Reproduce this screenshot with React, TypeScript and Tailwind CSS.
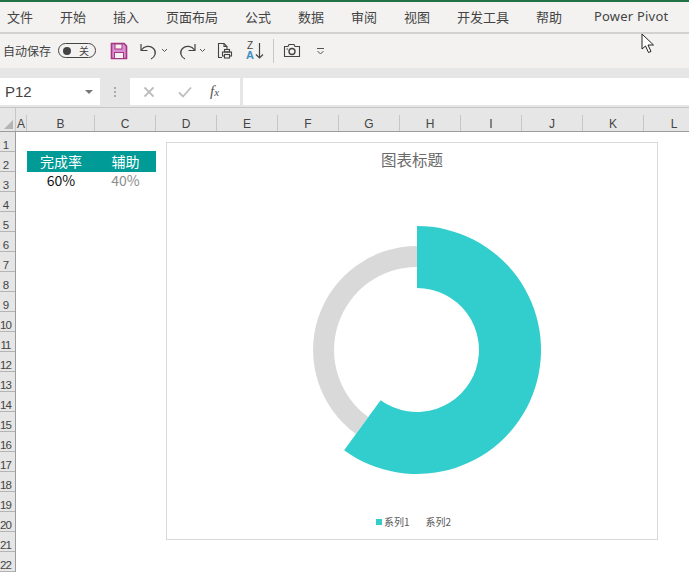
const cjk = "font-['Noto_Sans_CJK_SC','Noto_Sans',sans-serif]"

const tabs = [
  { label: '文件', w: 'w-[26px]' },
  { label: '开始', w: 'w-[26px]' },
  { label: '插入', w: 'w-[26px]' },
  { label: '页面布局', w: 'w-[52px]' },
  { label: '公式', w: 'w-[26px]' },
  { label: '数据', w: 'w-[26px]' },
  { label: '审阅', w: 'w-[26px]' },
  { label: '视图', w: 'w-[26px]' },
  { label: '开发工具', w: 'w-[52px]' },
  { label: '帮助', w: 'w-[26px]' }
]

const cols = [
  { label: 'A', w: 'w-[11px]' },
  { label: 'B', w: 'w-[68px]' },
  { label: 'C', w: 'w-[61px]' },
  { label: 'D', w: 'w-[61px]' },
  { label: 'E', w: 'w-[61px]' },
  { label: 'F', w: 'w-[61px]' },
  { label: 'G', w: 'w-[61px]' },
  { label: 'H', w: 'w-[61px]' },
  { label: 'I', w: 'w-[61px]' },
  { label: 'J', w: 'w-[61px]' },
  { label: 'K', w: 'w-[61px]' },
  { label: 'L', w: 'w-[61px]' }
]

const rows = Array.from({ length: 22 }, (_, i) => i + 1)

const Donut = () => (
  <svg width="260" height="260" viewBox="0 0 260 260" className="absolute left-[120px] top-[76.500px]">
    {/* center 130,130 = 417,349.5 on the page */}
    <path d="M130 26 A104 104 0 0 0 68.9 214.1 L81.2 197.1 A83 83 0 0 1 130 47 Z" fill="#d9d9d9" />
    <path d="M130 6 A124 124 0 1 1 57.1 230.3 L93.6 180.2 A62 62 0 1 0 130 68 Z" fill="#32cdcd" />
  </svg>
)

const Toolbar = () => (
  <div className="flex h-[34px] items-center bg-[#f3f2f1] pb-[1px]">
    <span className={`${cjk} ml-[3px] w-[50px] text-[12px] text-[#444]`}>自动保存</span>
    <div className="ml-[5px] flex h-[15px] w-[38px] shrink-0 items-center justify-between rounded-full border border-[#444] pl-[4px] pr-[6px]">
      <span className="h-[8px] w-[8px] rounded-full bg-[#444]" />
      <span className={`${cjk} text-[10px] leading-none text-[#444]`}>关</span>
    </div>
    <svg width="18" height="18" viewBox="0 0 18 18" className="ml-[14px]">
      <path d="M1.500 1.500H14L16.500 4V16.500H1.500Z" fill="#dc8fd4" stroke="#a4377f" strokeWidth="1.600" />
      <rect x="5" y="2" width="7" height="5" fill="#f3f2f1" stroke="#a4377f" />
      <rect x="4.500" y="10.500" width="9" height="6" fill="#f3f2f1" stroke="#a4377f" />
    </svg>
    <svg width="20" height="20" viewBox="0 0 20 20" className="ml-[11px]" fill="none" stroke="#444" strokeWidth="1.200">
      <path d="M2 3V9.500H8.500" />
      <path d="M2.500 9C5 5 11 4 14.500 7.500C18 11 16 16 12 18" />
    </svg>
    <svg width="7" height="5" viewBox="0 0 7 5" className="ml-[2px]" fill="none" stroke="#555">
      <path d="M1 1L3.500 3.500L6 1" />
    </svg>
    <svg width="20" height="20" viewBox="0 0 20 20" className="ml-[9px]" fill="none" stroke="#444" strokeWidth="1.200">
      <path d="M18 3V9.500H11.500" />
      <path d="M17.500 9C15 5 9 4 5.500 7.500C2 11 4 16 8 18" />
    </svg>
    <svg width="7" height="5" viewBox="0 0 7 5" className="ml-[2px]" fill="none" stroke="#555">
      <path d="M1 1L3.500 3.500L6 1" />
    </svg>
    <svg width="16" height="18" viewBox="0 0 16 18" className="ml-[11px]" fill="none" stroke="#444" strokeWidth="1.100">
      <path d="M5 15.500H1.500V1.500H7L10 4.500V7.500" />
      <path d="M7 1.500V4.500H10" />
      <rect x="7.500" y="7.500" width="5" height="2.500" />
      <rect x="5.500" y="10" width="9" height="4" />
      <rect x="7.500" y="12.500" width="5" height="3.500" fill="#f3f2f1" />
    </svg>
    <div className="ml-[12px] flex w-[10px] flex-col items-center">
      <span className="font-['Liberation_Sans',sans-serif] text-[10px] leading-[9px] text-[#444]">Z</span>
      <span className="font-['Liberation_Sans',sans-serif] text-[11px] font-bold leading-[10px] text-[#3d8fc4]">A</span>
    </div>
    <svg width="9" height="18" viewBox="0 0 9 18" fill="none" stroke="#444" strokeWidth="1.200">
      <path d="M4.500 1V16M1 12.500L4.500 16L8 12.500" />
    </svg>
    <div className="ml-[9px] h-[24px] w-px bg-[#c8c6c4]" />
    <svg width="18" height="15" viewBox="0 0 18 15" className="ml-[9px]" fill="none" stroke="#444" strokeWidth="1.100">
      <path d="M1.500 3.500H5L6 1.500H11L12 3.500H16.500V13.500H1.500Z" />
      <circle cx="9" cy="8.500" r="3" strokeWidth="1.400" />
      <path d="M3.500 6H5" />
    </svg>
    <svg width="9" height="8" viewBox="0 0 9 8" className="ml-[15px]" fill="none" stroke="#555">
      <path d="M1 1.500H8M1.500 4L4.500 7L7.500 4" />
    </svg>
  </div>
)

const FormulaBar = () => (
  <div className="flex h-[39px] items-start bg-[#e6e6e6] pt-[10px]">
    <div className="flex h-[27px] w-[100px] items-center justify-between bg-white pl-[5px] pr-[7px]">
      <span className="pt-[1px] font-['Liberation_Sans',sans-serif] text-[15px] text-[#444]">P12</span>
      <span className="h-0 w-0 border-x-[4px] border-t-[4px] border-x-transparent border-t-[#777]" />
    </div>
    <div className="flex h-[27px] w-[30px] flex-col items-center justify-center gap-[2px]">
      <span className="h-[2px] w-[2px] bg-[#aaa]" />
      <span className="h-[2px] w-[2px] bg-[#aaa]" />
      <span className="h-[2px] w-[2px] bg-[#aaa]" />
    </div>
    <div className="flex h-[27px] w-[110px] items-center bg-white">
      <svg width="12" height="12" viewBox="0 0 12 12" className="ml-[13px]" fill="none" stroke="#bdbdbd" strokeWidth="1.800">
        <path d="M1.500 1.500L10.500 10.500M10.500 1.500L1.500 10.500" />
      </svg>
      <svg width="14" height="12" viewBox="0 0 14 12" className="ml-[23px]" fill="none" stroke="#bdbdbd" strokeWidth="1.800">
        <path d="M1 6.500L5 10.500L13 1.500" />
      </svg>
      <span className="ml-[18px] font-['Liberation_Serif',serif] text-[15px] italic text-[#555]">
        f<span className="text-[11px]">x</span>
      </span>
    </div>
    <div className="ml-[3px] h-[27px] flex-1 bg-white" />
  </div>
)

const ColumnHeader = () => (
  <div className="flex h-[25px] items-end border-y border-t-[#c6c6c6] border-b-[#9c9c9c] bg-[#e6e6e6]">
    <div className="flex h-[23px] w-[16px] shrink-0 items-end justify-end border-r border-[#c6c6c6] pb-[2px] pr-[2px]">
      <span className="h-0 w-0 border-b-[9px] border-l-[9px] border-b-[#b4b4b4] border-l-transparent" />
    </div>
    {cols.map(c => (
      <div
        key={c.label}
        className={`${c.w} flex h-[16px] shrink-0 items-center justify-center border-r border-[#c6c6c6] pt-[1px] font-['Liberation_Sans',sans-serif] text-[12px] text-[#444]`}
      >
        {c.label}
      </div>
    ))}
  </div>
)

const RowHeader = () => (
  <div className="w-[16px] shrink-0 border-r border-[#9c9c9c] bg-[#e6e6e6]">
    {rows.map(r => (
      <div key={r} className="flex h-[20px] items-end border-b border-[#b4b4b4]">
        <span className="flex w-[11px] justify-center whitespace-nowrap font-['Liberation_Sans',sans-serif] text-[11.500px] leading-[12px] tracking-[-1px] text-[#444]">
          {r}
        </span>
      </div>
    ))}
  </div>
)

const App = () => {
  return (
    <div className="relative h-[574px] w-[689px] overflow-hidden bg-white">
      <div className="h-[2px] bg-[#217346]" />
      <div className={`${cjk} flex h-[30px] items-center gap-[27px] bg-[#f3f2f1] pb-[1px] pl-[7px] text-[13px] text-[#444]`}>
        {tabs.map(t => (
          <span key={t.label} className={`${t.w} whitespace-nowrap`}>
            {t.label}
          </span>
        ))}
        <span className="ml-[5px] whitespace-nowrap font-['Noto_Sans',sans-serif] tracking-[0.2px]">Power Pivot</span>
      </div>
      <div className="h-[2px] bg-[#d4d2d0]" />
      <Toolbar />
      <FormulaBar />
      <ColumnHeader />
      <div className="flex">
        <RowHeader />
        <div className="pl-[11px] pt-[19px]">
          <div className={`${cjk} grid w-[129px] grid-cols-[68px_61px] text-center text-[14px]`}>
            <div className="flex h-[21px] items-center justify-center bg-[#009b96] text-white">完成率</div>
            <div className="flex h-[21px] items-center justify-center bg-[#009b96] text-white">辅助</div>
            <div className="flex h-[17px] items-center justify-center text-[14px] text-[#111]">60%</div>
            <div className="flex h-[17px] items-center justify-center text-[14px] text-[#8c8c8c]">40%</div>
          </div>
        </div>
      </div>

      {/* chart floats over the sheet */}
      <div className="absolute left-[166px] top-[142px] h-[398px] w-[492px] border border-[#d9d9d9] bg-white">
        <div className={`${cjk} mt-[6px] text-center text-[15.500px] leading-[20px] text-[#6a6a6a]`}>
          图表标题
        </div>
        <Donut />
        <div className={`${cjk} absolute left-[209px] top-[371px] flex items-center text-[10px] text-[#595959]`}>
          <span className="mr-[2px] h-[6px] w-[6px] bg-[#32cdcd]" />
          <span>系列1</span>
          <span className="ml-[16px]">系列2</span>
        </div>
      </div>

      {/* mouse cursor */}
      <svg width="14" height="21" viewBox="0 0 14 21" className="absolute left-[641px] top-[33px]">
        <path d="M1 1V16L4.500 13L7.500 19.500L10 18.500L7 12H12.500Z" fill="#fff" stroke="#222" strokeWidth="1" />
      </svg>
    </div>
  )
}

export default App
